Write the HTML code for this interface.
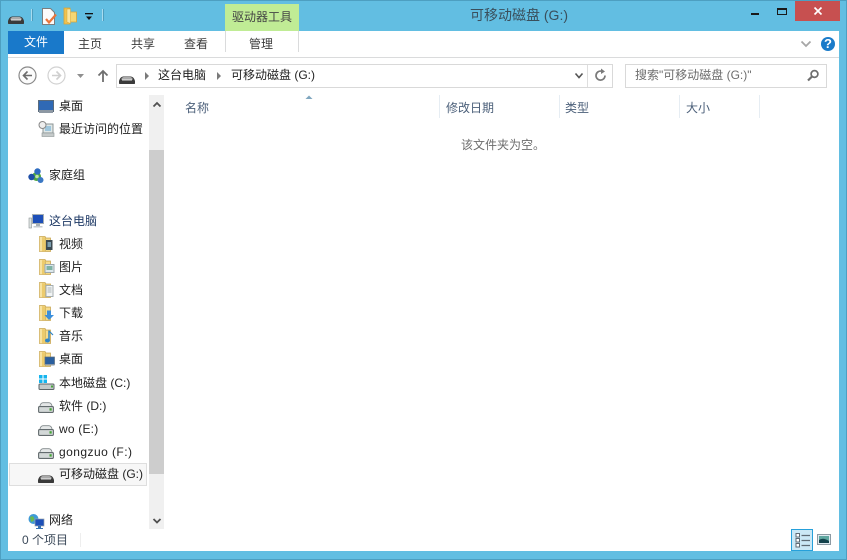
<!DOCTYPE html>
<html lang="zh"><head><meta charset="utf-8">
<style>
html,body{margin:0;padding:0}
body{width:847px;height:560px;overflow:hidden;position:relative;background:#62bee2;font-family:"Liberation Sans","Noto Sans CJK SC",sans-serif;font-size:12px;color:#222}
div,svg{position:absolute}
.t{white-space:nowrap;line-height:16px}
.g{color:#6d6d6d}
</style></head><body>
<svg width="0" height="0" style="position:absolute"><defs>
<symbol id="rem" viewBox="0 0 16 9"><path d="M0 8.500V6Q1 2 4 1.500H12Q15 2 16 6V8.500Q16 9 15 9H1Q0 9 0 8.500Z" fill="#3a3a3a"/><path d="M2 4.500Q3 2.300 4.500 2H11.500Q13 2.300 14 4.500Z" fill="#a9a9a9"/><rect x="3" y="4.300" width="10" height="1.200" fill="#dcdcdc"/></symbol>
<symbol id="hd" viewBox="0 0 16 11"><path d="M2 4Q2.500 1 5 .7H11Q13.500 1 14 4L15.500 6H.5Z" fill="#e4e7e7" stroke="#80888a" stroke-width=".8"/><rect x=".6" y="4.600" width="14.800" height="5.800" rx="1" fill="#d3d8d8" stroke="#636b6e" stroke-width="1.100"/><rect x="11.500" y="6.200" width="2.200" height="2.400" fill="#45a536"/></symbol>
<symbol id="fo" viewBox="0 0 16 16"><path d="M.5 .5H6L7 2H11.500V15.500H.5Z" fill="#f0d27e" stroke="#c9a857" stroke-width=".8"/><path d="M7 3H11V14.500H7Z" fill="#f5dc8e"/><path d="M.8 1H3V15.200H.8Z" fill="#f7e3a2"/><path d="M3 1.500H6.500V15.200H3Z" fill="#eccb6d"/><path d="M6.500 1.500V15.500" stroke="#d4b661" stroke-width=".8"/></symbol>
</defs></svg>

<!-- window edge -->
<div style="left:0;top:0;width:845px;height:558px;border:1px solid #4d9fc1"></div>

<!-- client area -->
<div style="left:8px;top:31px;width:831px;height:520px;background:#fff"></div>
<div style="left:8px;top:57px;width:831px;height:1px;background:#dadbdc"></div>

<!-- titlebar -->
<svg style="left:8px;top:15px" width="16" height="9"><use href="#rem" width="16" height="9"/></svg>
<div style="left:31px;top:9px;width:1px;height:12px;background:#a8dcf0"></div>
<div style="left:32px;top:9px;width:1px;height:12px;background:#4e9dbd"></div>
<svg style="left:41px;top:8px" width="17" height="18"><path d="M1.500 .5H9.500L13.500 4.500V16.500H1.500Z" fill="#fbfbfb" stroke="#7d7d7d"/><path d="M5 11L8 14.500L15 6.500" fill="none" stroke="#e9743a" stroke-width="2.200"/></svg>
<svg style="left:63px;top:7px" width="15" height="18" viewBox="0 0 15 18"><path d="M1 1H7V17H1Z" fill="#efc34f" stroke="#d6a437" stroke-width=".8"/><path d="M7 5H13.500V15H7Z" fill="#f6d773" stroke="#d6a437" stroke-width=".8"/><path d="M4 2H7.500V16.500L4 15Z" fill="#fae6a0" stroke="#d6a437" stroke-width=".5"/></svg>
<svg style="left:84px;top:12px" width="10" height="10"><rect x="1" y="1" width="8" height="1.300" fill="#111"/><path d="M2 4.500H8L5 8Z" fill="#111"/></svg>
<div style="left:102px;top:9px;width:1px;height:12px;background:#a8dcf0"></div>
<div style="left:103px;top:9px;width:1px;height:12px;background:#4e9dbd"></div>

<div style="left:225px;top:4px;width:74px;height:27px;background:#c0ec95"></div>
<div class="t" style="left:225px;top:9px;width:74px;text-align:center;color:#444">驱动器工具</div>
<div class="t" style="left:470px;top:7px;font-size:14px;line-height:17px;color:#3a4f5c">可移动磁盘 (G:)</div>

<div style="left:751px;top:13px;width:8px;height:2px;background:#1a1a1a"></div>
<div style="left:777px;top:8px;width:8px;height:4px;border:1px solid #1a1a1a;border-top-width:2px"></div>
<div style="left:795px;top:1px;width:45px;height:20px;background:#c75050"></div>
<svg style="left:813px;top:7px" width="10" height="8"><path d="M1.500 .5L8.500 7.500M8.500 .5L1.500 7.500" stroke="#fff" stroke-width="1.700"/></svg>

<!-- tabs -->
<div style="left:8px;top:31px;width:56px;height:23px;background:#1979ca"></div>
<div class="t" style="left:8px;top:34px;width:56px;text-align:center;color:#fff">文件</div>
<div class="t" style="left:78px;top:36px;color:#3c3c3c">主页</div>
<div class="t" style="left:131px;top:36px;color:#3c3c3c">共享</div>
<div class="t" style="left:184px;top:36px;color:#3c3c3c">查看</div>
<div style="left:225px;top:31px;width:1px;height:21px;background:#dadbdc"></div>
<div style="left:298px;top:31px;width:1px;height:21px;background:#dadbdc"></div>
<div class="t" style="left:249px;top:36px;color:#3c3c3c">管理</div>
<svg style="left:800px;top:40px" width="12" height="8"><path d="M1.500 1.500L6 6L10.500 1.500" fill="none" stroke="#a6a6a6" stroke-width="1.800"/></svg>
<div style="left:821px;top:37px;width:14px;height:14px;border-radius:50%;background:#1a7bc9;color:#fff;font:bold 13px/14px 'Liberation Sans',sans-serif;text-align:center">?</div>

<!-- nav buttons -->
<svg style="left:18px;top:66px" width="19" height="19"><circle cx="9.500" cy="9.500" r="8.500" fill="#fbfbfb" stroke="#8a8a8a" stroke-width="1.200"/><path d="M14 9.500H6M9.500 5.500L5.500 9.500L9.500 13.500" fill="none" stroke="#6b6b6b" stroke-width="1.600"/></svg>
<svg style="left:47px;top:66px" width="19" height="19"><circle cx="9.500" cy="9.500" r="8.500" fill="#fff" stroke="#d2d2d2" stroke-width="1.200"/><path d="M5 9.500H13M9.500 5.500L13.500 9.500L9.500 13.500" fill="none" stroke="#cfcfcf" stroke-width="1.600"/></svg>
<svg style="left:76px;top:73px" width="9" height="6"><path d="M1 1H8L4.500 5Z" fill="#8f8f8f"/></svg>
<svg style="left:97px;top:69px" width="12" height="14"><path d="M6 13V2M1.500 6.500L6 2L10.500 6.500" fill="none" stroke="#6f6f6f" stroke-width="1.800"/></svg>

<!-- address -->
<div style="left:116px;top:64px;width:495px;height:22px;border:1px solid #d9d9d9;box-sizing:content-box"></div>
<svg style="left:119px;top:75px" width="16" height="9"><use href="#rem" width="16" height="9"/></svg>
<svg style="left:144px;top:71px" width="6" height="10"><path d="M1 1L5 5L1 9Z" fill="#7a7a7a"/></svg>
<div class="t" style="left:158px;top:67px">这台电脑</div>
<svg style="left:216px;top:71px" width="6" height="10"><path d="M1 1L5 5L1 9Z" fill="#7a7a7a"/></svg>
<div class="t" style="left:231px;top:67px">可移动磁盘 (G:)</div>
<svg style="left:574px;top:72px" width="10" height="8"><path d="M1.500 1.500L5 5.500L8.500 1.500" fill="none" stroke="#555" stroke-width="1.600"/></svg>
<div style="left:587px;top:65px;width:1px;height:22px;background:#dedede"></div>
<svg style="left:594px;top:68px" width="14" height="15"><path d="M11 7.500A4.500 4.500 0 1 1 7.500 3.200" fill="none" stroke="#7a7a7a" stroke-width="1.700"/><path d="M7 .5L11 3.500L7 6Z" fill="#7a7a7a"/></svg>

<div style="left:625px;top:64px;width:200px;height:22px;border:1px solid #d9d9d9"></div>
<div class="t g" style="left:635px;top:67px">搜索"可移动磁盘 (G:)"</div>
<svg style="left:806px;top:69px" width="14" height="13"><circle cx="8.500" cy="5" r="3.400" fill="none" stroke="#6e6e6e" stroke-width="1.700"/><path d="M6 7.500L2 11.500" stroke="#6e6e6e" stroke-width="2.200"/></svg>

<!-- sidebar scrollbar -->
<div style="left:149px;top:95px;width:15px;height:434px;background:#f0f0f0"></div>
<div style="left:149px;top:150px;width:15px;height:324px;background:#cdcdcd"></div>
<svg style="left:152px;top:101px" width="10" height="8"><path d="M1.500 5.500L5 2L8.500 5.500" fill="none" stroke="#505050" stroke-width="1.800"/></svg>
<svg style="left:152px;top:517px" width="10" height="8"><path d="M1.500 2L5 5.500L8.500 2" fill="none" stroke="#505050" stroke-width="1.800"/></svg>

<!-- sidebar -->
<svg style="left:38px;top:100px" width="16" height="14"><rect x=".5" y=".5" width="15" height="11" fill="#2f69b5" stroke="#5a6b7c"/><rect x="1" y="10" width="14" height="3" fill="#8d98a3"/></svg>
<div class="t" style="left:59px;top:98px">桌面</div>
<svg style="left:38px;top:121px" width="17" height="17"><rect x="5" y="3" width="10" height="9" fill="#dfe7e7" stroke="#8c9494"/><rect x="7" y="5" width="6" height="5" fill="#9fc6dc"/><circle cx="4.500" cy="4" r="3.500" fill="#eee" stroke="#888"/><rect x="4" y="12" width="12" height="3.500" fill="#c5caca" stroke="#8c9494" stroke-width=".6"/></svg>
<div class="t" style="left:59px;top:121px">最近访问的位置</div>

<svg style="left:28px;top:168px" width="16" height="16"><circle cx="8.500" cy="8.500" r="4.500" fill="#4fa83f"/><circle cx="9.500" cy="3.500" r="3.200" fill="#2f6cc0"/><circle cx="3.500" cy="9" r="3.200" fill="#1f4fa8"/><circle cx="12.500" cy="12" r="3" fill="#3a78c4"/><circle cx="9" cy="8.500" r="1.800" fill="#bfe6a8"/></svg>
<div class="t" style="left:49px;top:167px">家庭组</div>

<svg style="left:28px;top:214px" width="16" height="16"><rect x="4.500" y=".5" width="11" height="9" fill="#1d4fb8" stroke="#a5aeb3"/><rect x="8" y="10" width="4" height="2" fill="#aab2b6"/><rect x="5.500" y="12" width="9" height="1.500" fill="#c5cbcf"/><rect x="1" y="4" width="2.500" height="10" fill="#dfe5e2" stroke="#8a9296" stroke-width=".6"/></svg>
<div class="t" style="left:49px;top:213px;color:#1f3a66">这台电脑</div>

<svg style="left:39px;top:236px" width="16" height="16"><use href="#fo"/><rect x="7" y="4" width="6.500" height="10" fill="#3c4a52"/><rect x="8.500" y="6" width="3.500" height="5" fill="#7d9fb0"/></svg>
<div class="t" style="left:59px;top:236px">视频</div>
<svg style="left:39px;top:259px" width="16" height="16"><use href="#fo"/><rect x="6" y="5.500" width="9" height="8" fill="#dce8ec" stroke="#9ea8ad"/><rect x="7.500" y="7" width="6" height="4" fill="#7fb3a5"/></svg>
<div class="t" style="left:59px;top:259px">图片</div>
<svg style="left:39px;top:282px" width="16" height="16"><use href="#fo"/><rect x="7" y="3.500" width="7" height="11" fill="#f2f5f5" stroke="#a5adb0"/><path d="M8.500 6H12.500M8.500 8H12.500M8.500 10H12.500" stroke="#a9b2b5"/></svg>
<div class="t" style="left:59px;top:282px">文档</div>
<svg style="left:39px;top:305px" width="16" height="16"><use href="#fo"/><path d="M8 5.500H12V10H15L10 15L5.500 10H8Z" fill="#3b8fdc"/></svg>
<div class="t" style="left:59px;top:305px">下载</div>
<svg style="left:39px;top:328px" width="16" height="16"><use href="#fo"/><path d="M10 2.500V12" stroke="#2e85c8" stroke-width="1.500"/><path d="M10 3L14 7" stroke="#2e85c8" stroke-width="1.200"/><ellipse cx="8.500" cy="12.500" rx="2.500" ry="2" fill="#2e85c8"/></svg>
<div class="t" style="left:59px;top:328px">音乐</div>
<svg style="left:39px;top:351px" width="16" height="16"><use href="#fo"/><rect x="6" y="6" width="9.500" height="7.500" fill="#2a5f9e" stroke="#5a6b7c" stroke-width=".7"/><rect x="6" y="13" width="9.500" height="1.500" fill="#8d98a3"/></svg>
<div class="t" style="left:59px;top:351px">桌面</div>

<svg style="left:38px;top:374px" width="17" height="17"><path d="M1 1H4.500V4.500H1ZM5.500 1H9V4.500H5.500ZM1 5.500H4.500V9H1ZM5.500 5.500H9V9H5.500Z" fill="#15b4ee"/><rect x="1" y="10" width="15" height="5.500" rx="1" fill="#c3c9c9" stroke="#5c6568"/><rect x="13" y="11.500" width="2" height="2" fill="#4aa53c"/></svg>
<div class="t" style="left:59px;top:375px">本地磁盘 (C:)</div>
<svg style="left:38px;top:402px" width="16" height="11"><use href="#hd" width="16" height="11"/></svg>
<div class="t" style="left:59px;top:398px">软件 (D:)</div>
<svg style="left:38px;top:425px" width="16" height="11"><use href="#hd" width="16" height="11"/></svg>
<div class="t" style="left:59px;top:421px;letter-spacing:.2px">wo (E:)</div>
<svg style="left:38px;top:448px" width="16" height="11"><use href="#hd" width="16" height="11"/></svg>
<div class="t" style="left:59px;top:444px;letter-spacing:.45px">gongzuo (F:)</div>

<div style="left:9px;top:463px;width:136px;height:21px;background:#f7f7f7;border:1px solid #dedede"></div>
<svg style="left:38px;top:474px" width="16" height="9"><use href="#rem" width="16" height="9"/></svg>
<div class="t" style="left:59px;top:466px">可移动磁盘 (G:)</div>

<svg style="left:28px;top:513px" width="17" height="17"><circle cx="5.500" cy="6" r="5" fill="#3f9ad6"/><path d="M2 4Q5 2 6 5T3 9Z" fill="#6ab94f"/><rect x="7" y="6" width="9" height="7" fill="#1c4fb8" stroke="#9aa5ab" stroke-width=".7"/><rect x="10" y="13" width="3" height="2" fill="#3672b0"/><rect x="8" y="15" width="7" height="1" fill="#3672b0"/></svg>
<div class="t" style="left:49px;top:512px">网络</div>

<!-- headers -->
<svg style="left:305px;top:95px" width="8" height="5"><path d="M.5 4L4 .5L7.500 4Z" fill="#7fa6bf"/></svg>
<div class="t g" style="left:185px;top:100px;color:#4c607a">名称</div>
<div style="left:439px;top:95px;width:1px;height:23px;background:#e6edf3"></div>
<div class="t" style="left:446px;top:100px;color:#4c607a">修改日期</div>
<div style="left:559px;top:95px;width:1px;height:23px;background:#e6edf3"></div>
<div class="t" style="left:565px;top:100px;color:#4c607a">类型</div>
<div style="left:679px;top:95px;width:1px;height:23px;background:#e6edf3"></div>
<div class="t" style="left:686px;top:100px;color:#4c607a">大小</div>
<div style="left:759px;top:95px;width:1px;height:23px;background:#e6edf3"></div>
<div class="t g" style="left:461px;top:137px">该文件夹为空。</div>

<!-- status -->
<div class="t" style="left:22px;top:532px;color:#3c4a5a">0 个项目</div>
<div style="left:80px;top:533px;width:1px;height:14px;background:#eee"></div>
<div style="left:791px;top:529px;width:20px;height:20px;border:1px solid #26a0da;background:#cbe8f6"></div>
<svg style="left:795px;top:533px" width="18" height="16"><g fill="#fff" stroke="#5f6b75"><rect x="1" y=".5" width="3.500" height="3.500"/><rect x="1" y="5.500" width="3.500" height="3.500"/><rect x="1" y="10.500" width="3.500" height="3.500"/></g><path d="M6.500 2.500H15M6.500 7.500H15M6.500 12.500H15" stroke="#5f6b75" stroke-width="1.200"/></svg>
<svg style="left:817px;top:534px" width="15" height="13"><rect x=".5" y=".5" width="13" height="10" fill="#dfeaf0" stroke="#8d9aa3"/><rect x="2" y="2" width="10" height="7" fill="#5fa7a0"/><path d="M2 6Q6 3 12 7V9H2Z" fill="#14424c"/></svg>
</body></html>
